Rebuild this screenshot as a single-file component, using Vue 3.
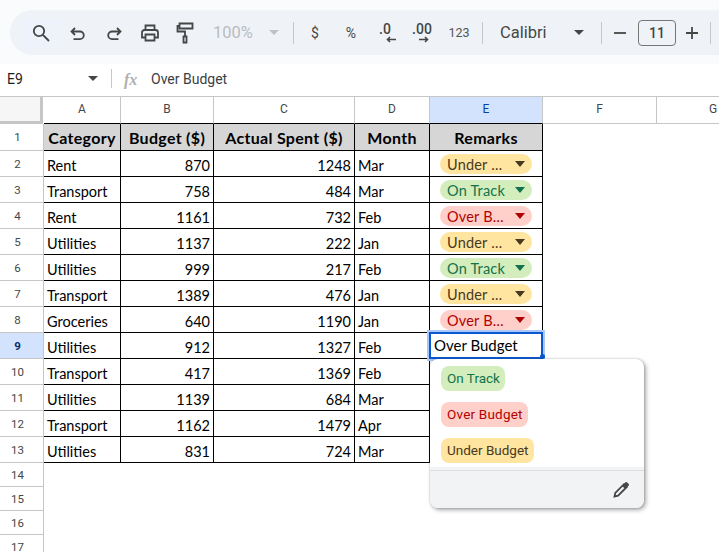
<script setup>
const cols = ['A', 'B', 'C', 'D', 'E', 'F', 'G']
const rows = [
  ['Rent', 870, 1248, 'Mar', 'Under Budget'],
  ['Transport', 758, 484, 'Mar', 'On Track'],
  ['Rent', 1161, 732, 'Feb', 'Over Budget'],
  ['Utilities', 1137, 222, 'Jan', 'Under Budget'],
  ['Utilities', 999, 217, 'Feb', 'On Track'],
  ['Transport', 1389, 476, 'Jan', 'Under Budget'],
  ['Groceries', 640, 1190, 'Jan', 'Over Budget'],
  ['Utilities', 912, 1327, 'Feb', ''],
  ['Transport', 417, 1369, 'Feb', ''],
  ['Utilities', 1139, 684, 'Mar', ''],
  ['Transport', 1162, 1479, 'Apr', ''],
  ['Utilities', 831, 724, 'Mar', '']
]
const tone = { 'Under Budget': 'under', 'On Track': 'track', 'Over Budget': 'over' }
const options = ['On Track', 'Over Budget', 'Under Budget']
</script>

<template>
  <div class="app">
    <div class="toolband">
      <div class="toolbar">
        <span class="tool search">
          <svg width="20" height="20" viewBox="0 0 20 20"><circle cx="8" cy="8" r="5.2" /><path d="M12 12l6 6" /></svg>
        </span>
        <span class="tool w32">
          <svg width="18" height="18" viewBox="0 0 18 18"><path d="M6 4L2.500 7.500 6 11M2.500 7.500H11a3.800 3.800 0 0 1 0 7.600H4.500" /></svg>
        </span>
        <span class="tool w40">
          <svg width="18" height="18" viewBox="0 0 18 18"><path d="M12 4l3.500 3.500L12 11M15.500 7.500H7a3.800 3.800 0 0 0 0 7.600h6.500" /></svg>
        </span>
        <span class="tool w32">
          <svg width="20" height="20" viewBox="0 0 20 20"><path d="M5.500 7V2.500h9V7M5 14.500H2V9.500a2.500 2.500 0 0 1 2.500-2.500h11A2.500 2.500 0 0 1 18 9.500v5h-3M5.500 11.500h9v6h-9z" /></svg>
        </span>
        <span class="tool w38">
          <svg width="18" height="22" viewBox="0 0 18 22"><path d="M3.500 1.500h13v5h-13zM3.500 4H1.500v5.500h7.500V14M7.500 14.500h3v6h-3z" /></svg>
        </span>
        <span class="zoomval">100%</span>
        <span class="caret light"></span>
        <span class="divider d1"></span>
        <span class="tool w34 sym">$</span>
        <span class="tool w38 sym">%</span>
        <span class="tool w30 dec">.0<svg class="arr a0" width="11" height="7" viewBox="0 0 11 7"><path d="M10 3.500H2M4 1L1.500 3.500 4 6" /></svg></span>
        <span class="tool w44 dec">.00<svg class="arr" width="11" height="7" viewBox="0 0 11 7"><path d="M1 3.500h8M7 1l2.500 2.500L7 6" /></svg></span>
        <span class="tool w30 num">123</span>
        <span class="divider d2"></span>
        <span class="fontname">Calibri</span>
        <span class="caret"></span>
        <span class="divider d3"></span>
        <span class="tool w36">
          <svg width="14" height="14" viewBox="0 0 14 14"><path d="M1 7h12" /></svg>
        </span>
        <span class="sizebox">11</span>
        <span class="tool w32">
          <svg width="14" height="14" viewBox="0 0 14 14"><path d="M1 7h12M7 1v12" /></svg>
        </span>
        <span class="divider d4"></span>
      </div>
    </div>

    <div class="namebar">
      <span class="cellref">E9</span>
      <span class="caret dark"></span>
      <span class="divider nb"></span>
      <span class="fx">fx</span>
      <span class="formula">Over Budget</span>
    </div>

    <div class="sheet">
      <div class="corner"></div>
      <div v-for="c in cols" :key="c" class="colhead" :class="{ active: c === 'E', tabled: c < 'F' }">{{ c }}</div>

      <div class="rowhead">1</div>
      <div class="cell th">Category</div>
      <div class="cell th">Budget ($)</div>
      <div class="cell th">Actual Spent ($)</div>
      <div class="cell th">Month</div>
      <div class="cell th">Remarks</div>
      <div class="blank"></div>

      <template v-for="(r, i) in rows" :key="i">
        <div class="rowhead" :class="{ active: i === 7 }">{{ i + 2 }}</div>
        <div class="cell">{{ r[0] }}</div>
        <div class="cell right">{{ r[1] }}</div>
        <div class="cell right">{{ r[2] }}</div>
        <div class="cell">{{ r[3] }}</div>
        <div class="cell chipcell">
          <span v-if="r[4]" class="chip" :class="tone[r[4]]">
            <span class="chiptext">{{ r[4] }}</span>
            <i class="chipcaret"></i>
          </span>
        </div>
        <div class="blank"></div>
      </template>

      <template v-for="n in [14, 15, 16, 17]" :key="n">
        <div class="rowhead">{{ n }}</div>
        <div class="blank wide"></div>
      </template>

      <div class="selected">Over Budget<i class="handle"></i></div>

      <div class="popup">
        <div class="optlist">
          <div v-for="o in options" :key="o" class="opt" :class="tone[o]">{{ o }}</div>
        </div>
        <div class="popfoot">
          <div class="footline">
            <svg width="18" height="18" viewBox="0 0 18 18"><path class="pen" d="M2.500 15.500l.8-3.600L12 3.200l2.800 2.800-8.700 8.700zM10.800 4.400l2.800 2.800" /><path class="tip" d="M11.800 3l1.700-1.700a1 1 0 0 1 1.400 0l1.800 1.800a1 1 0 0 1 0 1.400L15 6.200z" /></svg>
          </div>
        </div>
      </div>
    </div>
  </div>
</template>

<style>
html, body { margin: 0; overflow: hidden; background: #fff; }
</style>

<style scoped>
.app { width: 719px; height: 552px; overflow: hidden; font-family: Roboto, sans-serif; color: #444746; }
.toolband { height: 64px; box-sizing: border-box; padding: 10px 0 9px 10px; background: #f9fbfd; overflow: hidden; }
.toolbar { display: flex; align-items: center; height: 45px; width: 760px; background: #eff3f8; border-radius: 22px; padding-left: 10px; box-sizing: border-box; }
.tool { flex: none; display: flex; align-items: center; justify-content: center; height: 30px; }
.tool svg { fill: none; stroke: #444746; stroke-width: 1.800; }
.search { width: 42px; background: #edf2fb; border-radius: 4px; }
.w30 { width: 30px; } .w32 { width: 32px; } .w34 { width: 34px; } .w36 { width: 36px; } .w38 { width: 38px; } .w40 { width: 40px; } .w44 { width: 44px; }
.zoomval { flex: none; margin-left: 9px; width: 41px; font-size: 16.500px; color: #b9bcbe; }
.caret { flex: none; width: 0; height: 0; border: 5px solid transparent; border-top-color: #444746; border-bottom: 0; margin-left: 15px; }
.caret.light { border-top-color: #c0c3c5; }
.divider { flex: none; width: 1px; height: 22px; background: #c7c7c7; margin-left: 14px; }
.d1 { margin: 0 4px 0 14px; }
.d2 { margin-left: 8px; }
.d3 { margin-left: 17px; }
.d4 { margin-left: 2px; }
.sym { font-size: 14px; font-weight: 400; }
.dec { position: relative; font-size: 14px; font-weight: 500; align-items: flex-start; padding-top: 3px; box-sizing: border-box; }
.tool .arr { position: absolute; left: 50%; top: 18px; margin-left: -4px; stroke-width: 1.600; }
.tool .a0 { margin-left: 1px; }
.num { font-size: 12.500px; font-weight: 400; color: #555; }
.fontname { flex: none; width: 59px; margin-left: 17px; font-size: 16.500px; color: #444746; }
.sizebox { flex: none; width: 36px; height: 24px; border: 1px solid #747775; border-radius: 4px; text-align: center; line-height: 24px; font-size: 14px; font-weight: 500; }

.namebar { height: 33px; box-sizing: border-box; display: flex; align-items: center; padding-bottom: 3px; border-bottom: 1px solid #c4c7c5; background: #fff; }
.cellref { width: 88px; padding-left: 7px; box-sizing: border-box; font-size: 14px; color: #1f1f1f; }
.caret.dark { margin-left: 0; border-top-color: #444746; }
.divider.nb { margin-left: 13px; height: 19px; }
.fx { width: 27px; margin-left: 12px; font: italic 700 16px "Liberation Serif", serif; color: #b0b0b0; position: relative; top: 1px; }
.formula { font-size: 14px; color: #3c4043; }

.sheet { position: relative; display: grid; grid-template-columns: 44px 77px 93px 141px 75px 113px 114px 113px; grid-template-rows: 27px 27px repeat(12, 26px) repeat(4, 24px); height: 455px; overflow: hidden; font-family: Lato, sans-serif; font-size: 14.500px; color: #000; }
.corner { border-right: 3px solid #c4c7c5; border-bottom: 3px solid #c4c7c5; background: #f6f6f6; margin-right: 1px; }
.colhead { display: flex; align-items: center; justify-content: center; box-sizing: border-box; padding-bottom: 2px; border-right: 1px solid #c4c7c5; border-bottom: 1px solid #c4c7c5; font: 12px Roboto, sans-serif; color: #444746; }
.colhead.tabled { border-bottom-color: #000; }
.colhead.active { background: #d3e3fd; color: #0842a0; }
.rowhead { display: flex; align-items: center; justify-content: center; box-sizing: border-box; padding-right: 8px; border-right: 1px solid #c4c7c5; border-bottom: 1px solid #c4c7c5; font: 11.500px Roboto, sans-serif; color: #444746; }
.rowhead.active { background: #d3e3fd; color: #062e6f; font-weight: 700; }
.cell { display: flex; align-items: center; box-sizing: border-box; padding: 3px 3px 0; border-right: 1px solid #000; border-bottom: 1px solid #000; white-space: nowrap; overflow: hidden; }
.right { justify-content: flex-end; }
.th { justify-content: center; padding-top: 1px; background: #d6d6d6; font-weight: 700; font-size: 16px; letter-spacing: .3px; }
.blank { background: #fff; grid-column: span 2; }
.wide { grid-column: 2 / -1; }
.chipcell { justify-content: center; padding: 1px 0 0; }
.chip { display: flex; align-items: center; width: 92px; height: 20px; box-sizing: border-box; padding: 0 7px; border-radius: 10px; }
.chiptext { flex: 1; min-width: 0; padding-top: 1px; overflow: hidden; white-space: nowrap; text-overflow: ellipsis; margin-right: 7px; letter-spacing: .2px; }
.chipcaret { flex: none; width: 0; height: 0; border: 5px solid transparent; border-top: 6px solid currentColor; border-bottom: 0; }
.under { background: #ffe5a0; color: #473821; }
.track { background: #d4edbc; color: #11734b; }
.over { background: #ffcfc9; color: #b10202; }

.selected { position: absolute; left: 429px; top: 235px; width: 114px; height: 27px; box-sizing: border-box; border: 2px solid #0b57d0; outline: 2px solid #a8c7fa; outline-offset: 0; padding: 0 3px; background: #fff; font-size: 15px; line-height: 23px; }
.handle { position: absolute; right: -4px; bottom: -2px; width: 5px; height: 5px; border-radius: 50%; background: #0b57d0; }
.popup { position: absolute; left: 430px; top: 262px; width: 214px; height: 149px; display: flex; flex-direction: column; background: #fff; border-radius: 8px; box-shadow: 0 0 2px rgba(60, 64, 67, .35), 2px 2px 4px rgba(60, 64, 67, .45); overflow: hidden; font-family: Roboto, sans-serif; }
.optlist { flex: 1; display: flex; flex-direction: column; align-items: flex-start; gap: 11px; padding: 7px 0 0 11px; }
.opt { height: 25px; line-height: 25px; padding: 0 5px 0 6px; border-radius: 8px; font-size: 13.500px; }
.opt.over { letter-spacing: .2px; }
.popfoot { height: 41px; box-sizing: border-box; padding-top: 3px; background: #f1f3f4; }
.footline { height: 38px; box-sizing: border-box; border-top: 1px solid #dcdee0; display: flex; align-items: center; justify-content: flex-end; padding-right: 14px; }
.popfoot svg .pen { fill: none; stroke: #444746; stroke-width: 1.800; }
.popfoot svg .tip { fill: #444746; }
</style>
